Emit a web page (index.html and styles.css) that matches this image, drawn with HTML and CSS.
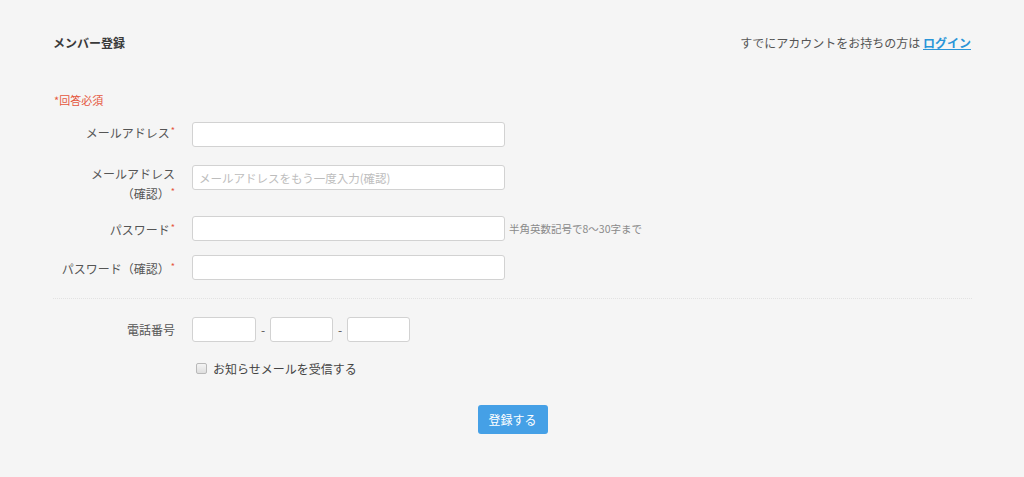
FILE: index.html
```html
<!DOCTYPE html>
<html lang="ja">
<head>
<meta charset="utf-8">
<title>メンバー登録</title>
<link rel="stylesheet" href="styles.css">
</head>
<body>
<div class="page">
  <header class="header">
    <h1 class="title">メンバー登録</h1>
    <p class="login-note">すでにアカウントをお持ちの方は <a class="login-link" href="#">ログイン</a></p>
  </header>

  <p class="required-note">*回答必須</p>

  <form class="form">
    <div class="row row-1">
      <label class="label">メールアドレス<span class="req">*</span></label>
      <input class="input input-wide" type="text">
    </div>
    <div class="row row-2">
      <label class="label">メールアドレス<br>（確認）<span class="req">*</span></label>
      <input class="input input-wide" type="text" placeholder="メールアドレスをもう一度入力(確認)">
    </div>
    <div class="row row-3 row-mid">
      <label class="label">パスワード<span class="req">*</span></label>
      <input class="input input-wide" type="password">
      <span class="hint">半角英数記号で8〜30字まで</span>
    </div>
    <div class="row row-4 row-mid">
      <label class="label">パスワード（確認）<span class="req">*</span></label>
      <input class="input input-wide" type="password">
    </div>

    <hr class="separator">

    <div class="row row-phone row-mid">
      <label class="label">電話番号</label>
      <div class="phone">
        <input class="input input-phone" type="text">
        <span class="dash">-</span>
        <input class="input input-phone" type="text">
        <span class="dash">-</span>
        <input class="input input-phone" type="text">
      </div>
    </div>

    <div class="check-row">
      <span class="checkbox"></span>
      <span class="check-text">お知らせメールを受信する</span>
    </div>

    <div class="submit-row">
      <button class="submit" type="button">登録する</button>
    </div>
  </form>
</div>
</body>
</html>
```

FILE: styles.css
```css
* {
  box-sizing: border-box;
}

html, body {
  margin: 0;
  padding: 0;
  background: #f5f5f5;
}

body {
  font-family: "Noto Sans CJK JP", "Noto Sans", sans-serif;
  color: #555;
  font-size: 12px;
  height: 477px;
  overflow: hidden;
}

.page {
  padding: 0 52px 0 53px;
}

.header {
  display: flex;
  justify-content: space-between;
  align-items: center;
  padding-top: 35px;
  line-height: 16px;
}

.title {
  margin: 0;
  font-size: 12px;
  font-weight: bold;
  color: #3a3a3a;
  line-height: 16px;
}

.login-note {
  margin: 0 1px 0 0;
  font-size: 12px;
  color: #555;
  line-height: 16px;
}

.login-link {
  color: #2a95d8;
  font-weight: bold;
  text-decoration: underline;
}

.required-note {
  margin: 41px 0 0 1px;
  font-size: 11px;
  line-height: 16px;
  color: #e5573e;
}

.form {
  margin: 14px 0 0;
}

.row {
  display: flex;
  align-items: flex-start;
  gap: 16px;
}

.row-mid {
  align-items: center;
}

.row-1 { margin-top: 0; }
.row-2 { margin-top: 18px; }
.row-3 { margin-top: 14px; }
.row-4 { margin-top: 14px; }

.label {
  width: 123px;
  flex: none;
  text-align: right;
  font-size: 12px;
  line-height: 17.5px;
  color: #555;
  padding-right: 1px;
}

.row-mid .label {
  line-height: 17px;
}

.req {
  color: #e5573e;
  font-size: 9px;
  vertical-align: 4px;
  margin-left: 1px;
}

.input {
  height: 25px;
  border: 1px solid #d2d2d2;
  border-radius: 3px;
  background: #fff;
  padding: 0 6px;
  font-family: inherit;
  font-size: 11.5px;
  color: #333;
  outline: none;
  margin: 0;
}

.input::placeholder {
  color: #bdbdbd;
}

.input-wide {
  width: 313px;
}

.hint {
  margin-left: -12px;
  font-size: 10.5px;
  color: #8a8a8a;
  white-space: nowrap;
}

.separator {
  border: none;
  border-top: 1px dotted #e2e2e2;
  margin: 18px 0 0;
  height: 0;
}

.row-phone {
  margin-top: 18px;
}

.phone {
  display: flex;
  align-items: center;
}

.input-phone {
  width: 64px;
}

.phone .input-phone + .dash + .input-phone {
  width: 63px;
}

.dash {
  width: 14px;
  text-align: center;
  font-size: 12px;
  color: #555;
}

.check-row {
  display: flex;
  align-items: center;
  margin-top: 18px;
  padding-left: 143px;
  height: 16px;
}

.checkbox {
  width: 11px;
  height: 11px;
  border: 1px solid #b9b9b9;
  border-radius: 2px;
  background: linear-gradient(#f4f4f4, #dedede);
}

.check-text {
  margin-left: 6px;
  font-size: 12px;
  color: #444;
}

.submit-row {
  display: flex;
  justify-content: center;
  margin-top: 29px;
}

.submit {
  width: 70px;
  height: 29px;
  border: none;
  border-radius: 3px;
  background: #45a0e6;
  color: #fff;
  font-family: inherit;
  font-size: 12px;
  padding: 0;
  cursor: pointer;
}
```
